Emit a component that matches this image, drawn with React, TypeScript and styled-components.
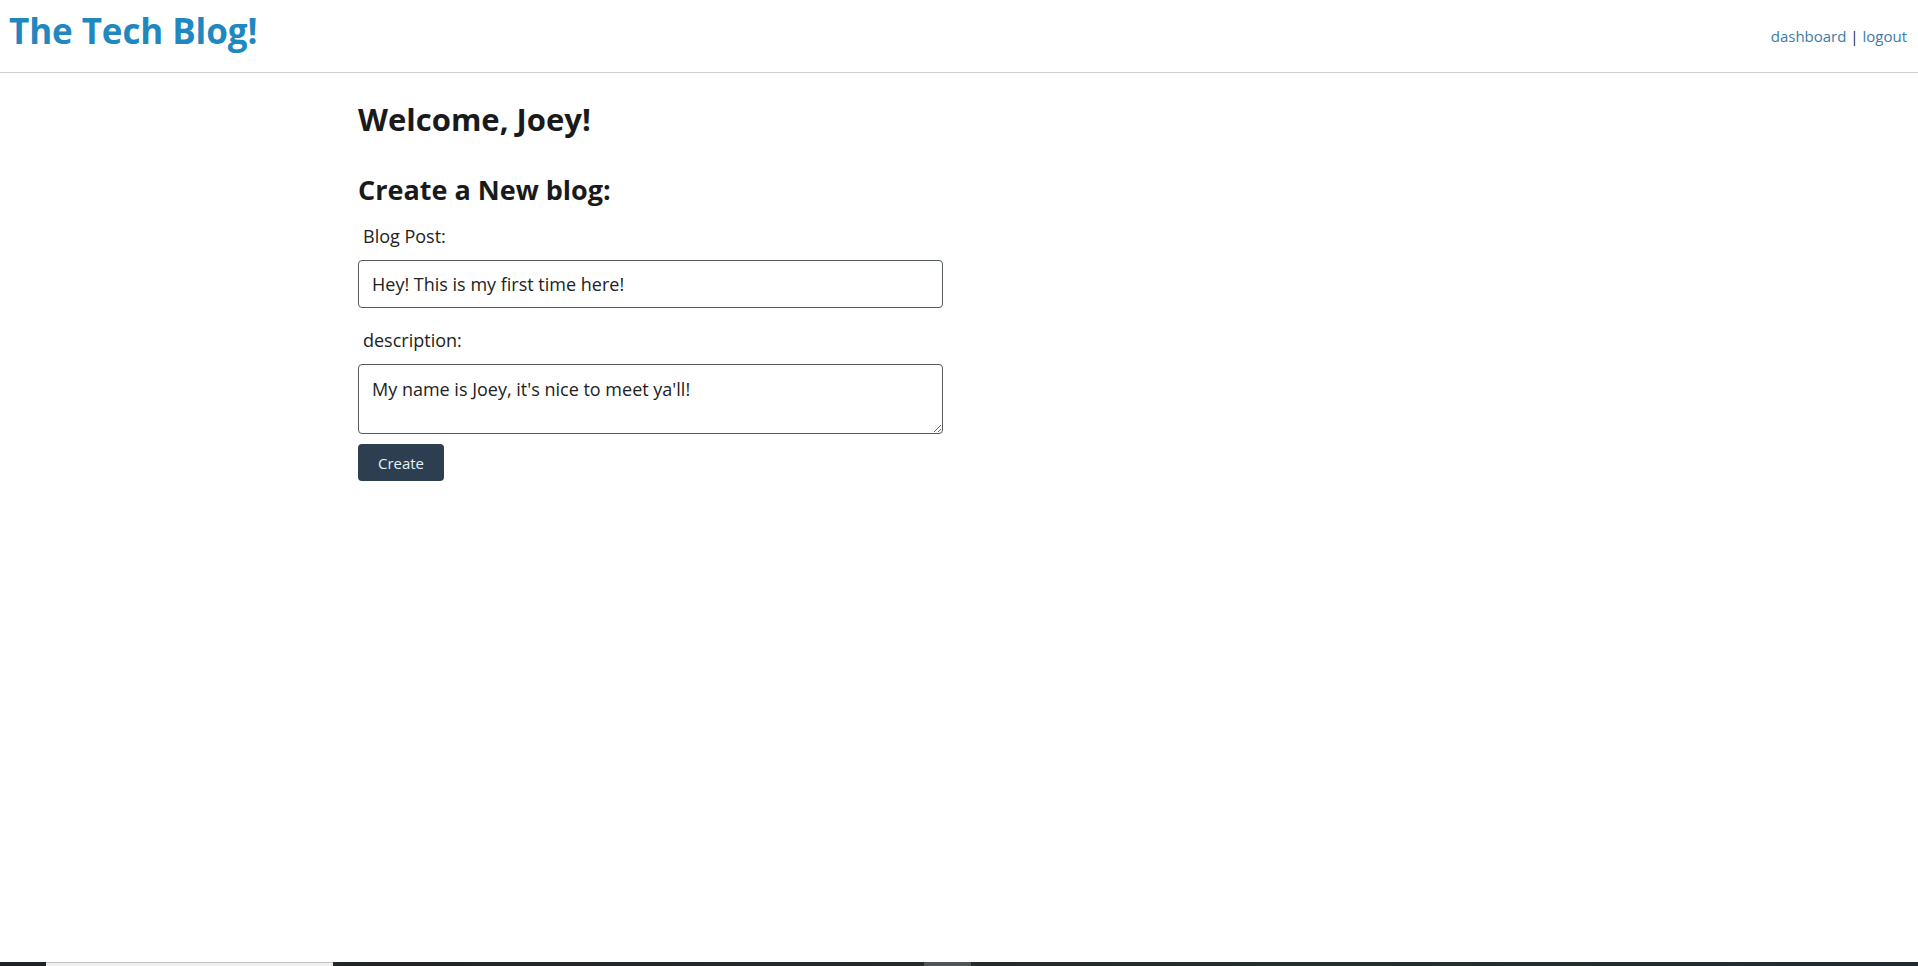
import React from "react";
import styled, { createGlobalStyle } from "styled-components";

const GlobalStyle = createGlobalStyle`
  html, body {
    margin: 0;
    padding: 0;
    background: #ffffff;
  }
  body {
    font-family: "Open Sans", "Noto Sans", "Liberation Sans", sans-serif;
    color: #212529;
  }
  * { box-sizing: border-box; }
`;

const Page = styled.div`
  min-height: 100vh;
  display: flex;
  flex-direction: column;
`;

const Header = styled.header`
  height: 73px;
  display: flex;
  align-items: flex-start;
  justify-content: space-between;
  border-bottom: 1px solid #cfcfcf;
  padding: 0 11px 0 9px;
`;

const Brand = styled.h1`
  margin: 11px 0 0 0;
  font-size: 35px;
  line-height: 40px;
  font-weight: 700;
  color: #2188bf;
  letter-spacing: -0.1px;
`;

const Nav = styled.nav`
  margin-top: 26px;
  font-size: 15px;
  line-height: 20px;
  color: #1d1d3f;
`;

const NavLink = styled.a`
  color: #3b7ca6;
  text-decoration: none;
`;

const Main = styled.main`
  width: 1202px;
  margin: 0 auto;
`;

const Welcome = styled.h2`
  margin: 28px 0 0 0;
  font-size: 31px;
  line-height: 36px;
  font-weight: 700;
  color: #1a1a1a;
`;

const SubHeading = styled.h3`
  margin: 37px 0 0 0;
  font-size: 27px;
  line-height: 32px;
  font-weight: 700;
  color: #1a1a1a;
`;

const Form = styled.form`
  width: 585px;
  display: flex;
  flex-direction: column;
  align-items: flex-start;
`;

const Label = styled.label<{ $gap: number }>`
  display: block;
  margin-top: ${(p) => p.$gap}px;
  padding-left: 5px;
  font-size: 18px;
  line-height: 24px;
  color: #222222;
`;

const TextInput = styled.input`
  margin-top: 12px;
  width: 585px;
  height: 48px;
  padding: 0 13px;
  border: 1px solid #555a5e;
  border-radius: 4px;
  font-family: inherit;
  font-size: 18px;
  color: #222222;
  background: #ffffff;
  outline: none;
`;

const TextArea = styled.textarea`
  margin-top: 12px;
  width: 585px;
  height: 70px;
  padding: 12px 13px;
  border: 1px solid #555a5e;
  border-radius: 4px;
  font-family: inherit;
  font-size: 18px;
  line-height: 24px;
  color: #222222;
  background: #ffffff;
  outline: none;
  display: block;
`;

const Button = styled.button`
  margin-top: 10px;
  width: 86px;
  height: 37px;
  border: none;
  border-radius: 4px;
  background: #2c3e50;
  color: #e6f2f8;
  font-family: inherit;
  font-size: 15px;
  cursor: pointer;
`;

const Taskbar = styled.div`
  margin-top: auto;
  height: 4px;
  display: flex;
  background: linear-gradient(90deg, #1f2326 0%, #23282a 40%, #22312f 70%, #1e2b33 100%);
`;

const TaskSegment = styled.div<{ $w: number; $bg: string; $top?: string }>`
  width: ${(p) => p.$w}px;
  flex: none;
  background: ${(p) => p.$bg};
  border-top: ${(p) => (p.$top ? `1px solid ${p.$top}` : "none")};
`;

export default function App() {
  return (
    <Page>
      <GlobalStyle />
      <Header>
        <Brand>The Tech Blog!</Brand>
        <Nav>
          <NavLink href="#">dashboard</NavLink> | <NavLink href="#">logout</NavLink>
        </Nav>
      </Header>
      <Main>
        <Welcome>Welcome, Joey!</Welcome>
        <SubHeading>Create a New blog:</SubHeading>
        <Form onSubmit={(e) => e.preventDefault()}>
          <Label $gap={18} htmlFor="post-title">Blog Post:</Label>
          <TextInput id="post-title" type="text" defaultValue="Hey! This is my first time here!" />
          <Label $gap={20} htmlFor="post-desc">description:</Label>
          <TextArea id="post-desc" defaultValue="My name is Joey, it's nice to meet ya'll!" />
          <Button type="submit">Create</Button>
        </Form>
      </Main>
      <Taskbar>
        <TaskSegment $w={46} $bg="transparent" />
        <TaskSegment $w={287} $bg="#efefef" $top="#c4c4c4" />
        <TaskSegment $w={591} $bg="transparent" />
        <TaskSegment $w={47} $bg="#4c5659" />
      </Taskbar>
    </Page>
  );
}
